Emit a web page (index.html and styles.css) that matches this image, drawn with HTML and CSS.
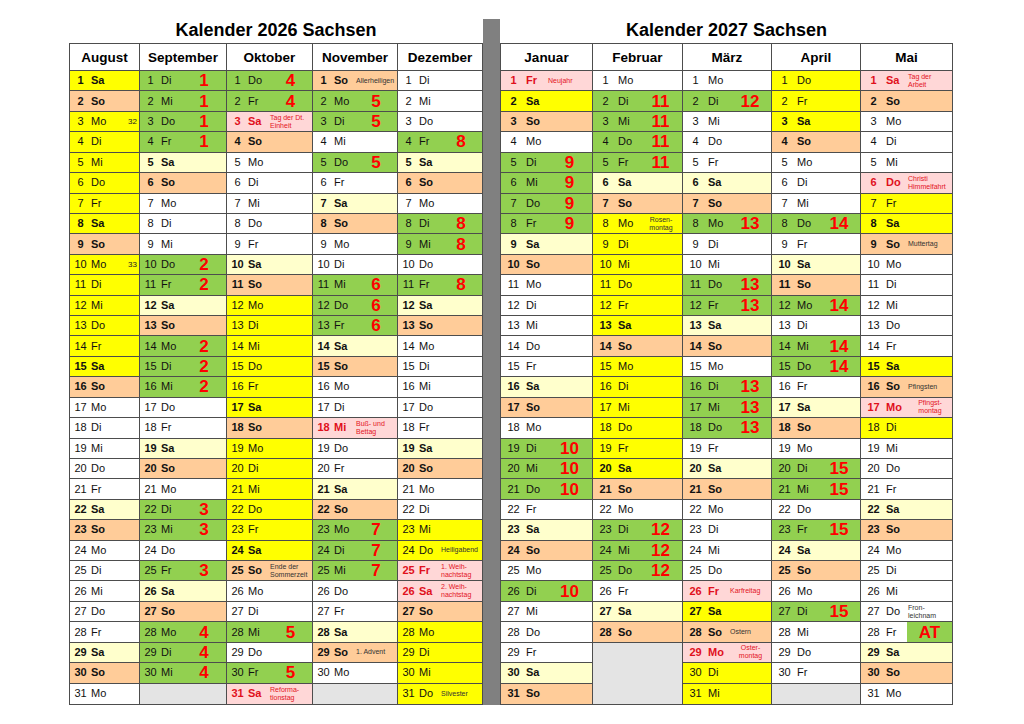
FILE: index.html
```html
<!DOCTYPE html>
<html lang="de">
<head>
<meta charset="utf-8">
<title>Kalender 2026/2027 Sachsen</title>
<link rel="stylesheet" href="styles.css">
</head>
<body>
<div class="page">
  <section class="half left">
    <h1 class="title">Kalender 2026 Sachsen</h1>
    <div class="table">
      <div class="month aug">
        <div class="head">August</div>
        <div class="d ys"><span>1</span><span>Sa</span></div>
        <div class="d so"><span>2</span><span>So</span></div>
        <div class="d y"><span>3</span><span>Mo</span><span class="kw">32</span></div>
        <div class="d y"><span>4</span><span>Di</span></div>
        <div class="d y"><span>5</span><span>Mi</span></div>
        <div class="d y"><span>6</span><span>Do</span></div>
        <div class="d y"><span>7</span><span>Fr</span></div>
        <div class="d ys"><span>8</span><span>Sa</span></div>
        <div class="d so"><span>9</span><span>So</span></div>
        <div class="d y"><span>10</span><span>Mo</span><span class="kw">33</span></div>
        <div class="d y"><span>11</span><span>Di</span></div>
        <div class="d y"><span>12</span><span>Mi</span></div>
        <div class="d y"><span>13</span><span>Do</span></div>
        <div class="d y"><span>14</span><span>Fr</span></div>
        <div class="d ys"><span>15</span><span>Sa</span></div>
        <div class="d so"><span>16</span><span>So</span></div>
        <div class="d"><span>17</span><span>Mo</span></div>
        <div class="d"><span>18</span><span>Di</span></div>
        <div class="d"><span>19</span><span>Mi</span></div>
        <div class="d"><span>20</span><span>Do</span></div>
        <div class="d"><span>21</span><span>Fr</span></div>
        <div class="d sa"><span>22</span><span>Sa</span></div>
        <div class="d so"><span>23</span><span>So</span></div>
        <div class="d"><span>24</span><span>Mo</span></div>
        <div class="d"><span>25</span><span>Di</span></div>
        <div class="d"><span>26</span><span>Mi</span></div>
        <div class="d"><span>27</span><span>Do</span></div>
        <div class="d"><span>28</span><span>Fr</span></div>
        <div class="d sa"><span>29</span><span>Sa</span></div>
        <div class="d so"><span>30</span><span>So</span></div>
        <div class="d"><span>31</span><span>Mo</span></div>
      </div>
      <div class="month">
        <div class="head">September</div>
        <div class="d g"><span>1</span><span>Di</span><span class="k">1</span></div>
        <div class="d g"><span>2</span><span>Mi</span><span class="k">1</span></div>
        <div class="d g"><span>3</span><span>Do</span><span class="k">1</span></div>
        <div class="d g"><span>4</span><span>Fr</span><span class="k">1</span></div>
        <div class="d sa"><span>5</span><span>Sa</span></div>
        <div class="d so"><span>6</span><span>So</span></div>
        <div class="d"><span>7</span><span>Mo</span></div>
        <div class="d"><span>8</span><span>Di</span></div>
        <div class="d"><span>9</span><span>Mi</span></div>
        <div class="d g"><span>10</span><span>Do</span><span class="k">2</span></div>
        <div class="d g"><span>11</span><span>Fr</span><span class="k">2</span></div>
        <div class="d sa"><span>12</span><span>Sa</span></div>
        <div class="d so"><span>13</span><span>So</span></div>
        <div class="d g"><span>14</span><span>Mo</span><span class="k">2</span></div>
        <div class="d g"><span>15</span><span>Di</span><span class="k">2</span></div>
        <div class="d g"><span>16</span><span>Mi</span><span class="k">2</span></div>
        <div class="d"><span>17</span><span>Do</span></div>
        <div class="d"><span>18</span><span>Fr</span></div>
        <div class="d sa"><span>19</span><span>Sa</span></div>
        <div class="d so"><span>20</span><span>So</span></div>
        <div class="d"><span>21</span><span>Mo</span></div>
        <div class="d g"><span>22</span><span>Di</span><span class="k">3</span></div>
        <div class="d g"><span>23</span><span>Mi</span><span class="k">3</span></div>
        <div class="d"><span>24</span><span>Do</span></div>
        <div class="d g"><span>25</span><span>Fr</span><span class="k">3</span></div>
        <div class="d sa"><span>26</span><span>Sa</span></div>
        <div class="d so"><span>27</span><span>So</span></div>
        <div class="d g"><span>28</span><span>Mo</span><span class="k">4</span></div>
        <div class="d g"><span>29</span><span>Di</span><span class="k">4</span></div>
        <div class="d g"><span>30</span><span>Mi</span><span class="k">4</span></div>
        <div class="d e"></div>
      </div>
      <div class="month">
        <div class="head">Oktober</div>
        <div class="d g"><span>1</span><span>Do</span><span class="k">4</span></div>
        <div class="d g"><span>2</span><span>Fr</span><span class="k">4</span></div>
        <div class="d h"><span>3</span><span>Sa</span><span class="t">Tag der Dt.<br>Einheit</span></div>
        <div class="d so"><span>4</span><span>So</span></div>
        <div class="d"><span>5</span><span>Mo</span></div>
        <div class="d"><span>6</span><span>Di</span></div>
        <div class="d"><span>7</span><span>Mi</span></div>
        <div class="d"><span>8</span><span>Do</span></div>
        <div class="d"><span>9</span><span>Fr</span></div>
        <div class="d sa"><span>10</span><span>Sa</span></div>
        <div class="d so"><span>11</span><span>So</span></div>
        <div class="d y"><span>12</span><span>Mo</span></div>
        <div class="d y"><span>13</span><span>Di</span></div>
        <div class="d y"><span>14</span><span>Mi</span></div>
        <div class="d y"><span>15</span><span>Do</span></div>
        <div class="d y"><span>16</span><span>Fr</span></div>
        <div class="d ys"><span>17</span><span>Sa</span></div>
        <div class="d so"><span>18</span><span>So</span></div>
        <div class="d y"><span>19</span><span>Mo</span></div>
        <div class="d y"><span>20</span><span>Di</span></div>
        <div class="d y"><span>21</span><span>Mi</span></div>
        <div class="d y"><span>22</span><span>Do</span></div>
        <div class="d y"><span>23</span><span>Fr</span></div>
        <div class="d ys"><span>24</span><span>Sa</span></div>
        <div class="d so"><span>25</span><span>So</span><span class="t">Ende der<br>Sommerzeit</span></div>
        <div class="d"><span>26</span><span>Mo</span></div>
        <div class="d"><span>27</span><span>Di</span></div>
        <div class="d g"><span>28</span><span>Mi</span><span class="k">5</span></div>
        <div class="d"><span>29</span><span>Do</span></div>
        <div class="d g"><span>30</span><span>Fr</span><span class="k">5</span></div>
        <div class="d h"><span>31</span><span>Sa</span><span class="t">Reforma-<br>tionstag</span></div>
      </div>
      <div class="month">
        <div class="head">November</div>
        <div class="d so"><span>1</span><span>So</span><span class="t">Allerheiligen</span></div>
        <div class="d g"><span>2</span><span>Mo</span><span class="k">5</span></div>
        <div class="d g"><span>3</span><span>Di</span><span class="k">5</span></div>
        <div class="d"><span>4</span><span>Mi</span></div>
        <div class="d g"><span>5</span><span>Do</span><span class="k">5</span></div>
        <div class="d"><span>6</span><span>Fr</span></div>
        <div class="d sa"><span>7</span><span>Sa</span></div>
        <div class="d so"><span>8</span><span>So</span></div>
        <div class="d"><span>9</span><span>Mo</span></div>
        <div class="d"><span>10</span><span>Di</span></div>
        <div class="d g"><span>11</span><span>Mi</span><span class="k">6</span></div>
        <div class="d g"><span>12</span><span>Do</span><span class="k">6</span></div>
        <div class="d g"><span>13</span><span>Fr</span><span class="k">6</span></div>
        <div class="d sa"><span>14</span><span>Sa</span></div>
        <div class="d so"><span>15</span><span>So</span></div>
        <div class="d"><span>16</span><span>Mo</span></div>
        <div class="d"><span>17</span><span>Di</span></div>
        <div class="d h"><span>18</span><span>Mi</span><span class="t">Buß- und<br>Bettag</span></div>
        <div class="d"><span>19</span><span>Do</span></div>
        <div class="d"><span>20</span><span>Fr</span></div>
        <div class="d sa"><span>21</span><span>Sa</span></div>
        <div class="d so"><span>22</span><span>So</span></div>
        <div class="d g"><span>23</span><span>Mo</span><span class="k">7</span></div>
        <div class="d g"><span>24</span><span>Di</span><span class="k">7</span></div>
        <div class="d g"><span>25</span><span>Mi</span><span class="k">7</span></div>
        <div class="d"><span>26</span><span>Do</span></div>
        <div class="d"><span>27</span><span>Fr</span></div>
        <div class="d sa"><span>28</span><span>Sa</span></div>
        <div class="d so"><span>29</span><span>So</span><span class="t">1. Advent</span></div>
        <div class="d"><span>30</span><span>Mo</span></div>
        <div class="d e"></div>
      </div>
      <div class="month">
        <div class="head">Dezember</div>
        <div class="d"><span>1</span><span>Di</span></div>
        <div class="d"><span>2</span><span>Mi</span></div>
        <div class="d"><span>3</span><span>Do</span></div>
        <div class="d g"><span>4</span><span>Fr</span><span class="k">8</span></div>
        <div class="d sa"><span>5</span><span>Sa</span></div>
        <div class="d so"><span>6</span><span>So</span></div>
        <div class="d"><span>7</span><span>Mo</span></div>
        <div class="d g"><span>8</span><span>Di</span><span class="k">8</span></div>
        <div class="d g"><span>9</span><span>Mi</span><span class="k">8</span></div>
        <div class="d"><span>10</span><span>Do</span></div>
        <div class="d g"><span>11</span><span>Fr</span><span class="k">8</span></div>
        <div class="d sa"><span>12</span><span>Sa</span></div>
        <div class="d so"><span>13</span><span>So</span></div>
        <div class="d"><span>14</span><span>Mo</span></div>
        <div class="d"><span>15</span><span>Di</span></div>
        <div class="d"><span>16</span><span>Mi</span></div>
        <div class="d"><span>17</span><span>Do</span></div>
        <div class="d"><span>18</span><span>Fr</span></div>
        <div class="d sa"><span>19</span><span>Sa</span></div>
        <div class="d so"><span>20</span><span>So</span></div>
        <div class="d"><span>21</span><span>Mo</span></div>
        <div class="d"><span>22</span><span>Di</span></div>
        <div class="d y"><span>23</span><span>Mi</span></div>
        <div class="d y"><span>24</span><span>Do</span><span class="t">Heiligabend</span></div>
        <div class="d h"><span>25</span><span>Fr</span><span class="t">1. Weih-<br>nachtstag</span></div>
        <div class="d h"><span>26</span><span>Sa</span><span class="t">2. Weih-<br>nachtstag</span></div>
        <div class="d so"><span>27</span><span>So</span></div>
        <div class="d y"><span>28</span><span>Mo</span></div>
        <div class="d y"><span>29</span><span>Di</span></div>
        <div class="d y"><span>30</span><span>Mi</span></div>
        <div class="d y"><span>31</span><span>Do</span><span class="t">Silvester</span></div>
      </div>
    </div>
  </section>

  <div class="divider"></div>

  <section class="half right">
    <h1 class="title">Kalender 2027 Sachsen</h1>
    <div class="table">
      <div class="month">
        <div class="head">Januar</div>
        <div class="d h"><span>1</span><span>Fr</span><span class="t">Neujahr</span></div>
        <div class="d ys"><span>2</span><span>Sa</span></div>
        <div class="d so"><span>3</span><span>So</span></div>
        <div class="d"><span>4</span><span>Mo</span></div>
        <div class="d g"><span>5</span><span>Di</span><span class="k">9</span></div>
        <div class="d g"><span>6</span><span>Mi</span><span class="k">9</span></div>
        <div class="d g"><span>7</span><span>Do</span><span class="k">9</span></div>
        <div class="d g"><span>8</span><span>Fr</span><span class="k">9</span></div>
        <div class="d sa"><span>9</span><span>Sa</span></div>
        <div class="d so"><span>10</span><span>So</span></div>
        <div class="d"><span>11</span><span>Mo</span></div>
        <div class="d"><span>12</span><span>Di</span></div>
        <div class="d"><span>13</span><span>Mi</span></div>
        <div class="d"><span>14</span><span>Do</span></div>
        <div class="d"><span>15</span><span>Fr</span></div>
        <div class="d sa"><span>16</span><span>Sa</span></div>
        <div class="d so"><span>17</span><span>So</span></div>
        <div class="d"><span>18</span><span>Mo</span></div>
        <div class="d g"><span>19</span><span>Di</span><span class="k">10</span></div>
        <div class="d g"><span>20</span><span>Mi</span><span class="k">10</span></div>
        <div class="d g"><span>21</span><span>Do</span><span class="k">10</span></div>
        <div class="d"><span>22</span><span>Fr</span></div>
        <div class="d sa"><span>23</span><span>Sa</span></div>
        <div class="d so"><span>24</span><span>So</span></div>
        <div class="d"><span>25</span><span>Mo</span></div>
        <div class="d g"><span>26</span><span>Di</span><span class="k">10</span></div>
        <div class="d"><span>27</span><span>Mi</span></div>
        <div class="d"><span>28</span><span>Do</span></div>
        <div class="d"><span>29</span><span>Fr</span></div>
        <div class="d sa"><span>30</span><span>Sa</span></div>
        <div class="d so"><span>31</span><span>So</span></div>
      </div>
      <div class="month">
        <div class="head">Februar</div>
        <div class="d"><span>1</span><span>Mo</span></div>
        <div class="d g"><span>2</span><span>Di</span><span class="k">11</span></div>
        <div class="d g"><span>3</span><span>Mi</span><span class="k">11</span></div>
        <div class="d g"><span>4</span><span>Do</span><span class="k">11</span></div>
        <div class="d g"><span>5</span><span>Fr</span><span class="k">11</span></div>
        <div class="d sa"><span>6</span><span>Sa</span></div>
        <div class="d so"><span>7</span><span>So</span></div>
        <div class="d y"><span>8</span><span>Mo</span><span class="t c">Rosen-<br>montag</span></div>
        <div class="d y"><span>9</span><span>Di</span></div>
        <div class="d y"><span>10</span><span>Mi</span></div>
        <div class="d y"><span>11</span><span>Do</span></div>
        <div class="d y"><span>12</span><span>Fr</span></div>
        <div class="d ys"><span>13</span><span>Sa</span></div>
        <div class="d so"><span>14</span><span>So</span></div>
        <div class="d y"><span>15</span><span>Mo</span></div>
        <div class="d y"><span>16</span><span>Di</span></div>
        <div class="d y"><span>17</span><span>Mi</span></div>
        <div class="d y"><span>18</span><span>Do</span></div>
        <div class="d y"><span>19</span><span>Fr</span></div>
        <div class="d ys"><span>20</span><span>Sa</span></div>
        <div class="d so"><span>21</span><span>So</span></div>
        <div class="d"><span>22</span><span>Mo</span></div>
        <div class="d g"><span>23</span><span>Di</span><span class="k">12</span></div>
        <div class="d g"><span>24</span><span>Mi</span><span class="k">12</span></div>
        <div class="d g"><span>25</span><span>Do</span><span class="k">12</span></div>
        <div class="d"><span>26</span><span>Fr</span></div>
        <div class="d sa"><span>27</span><span>Sa</span></div>
        <div class="d so"><span>28</span><span>So</span></div>
        <div class="d e span3"></div>
      </div>
      <div class="month">
        <div class="head">März</div>
        <div class="d"><span>1</span><span>Mo</span></div>
        <div class="d g"><span>2</span><span>Di</span><span class="k">12</span></div>
        <div class="d"><span>3</span><span>Mi</span></div>
        <div class="d"><span>4</span><span>Do</span></div>
        <div class="d"><span>5</span><span>Fr</span></div>
        <div class="d sa"><span>6</span><span>Sa</span></div>
        <div class="d so"><span>7</span><span>So</span></div>
        <div class="d g"><span>8</span><span>Mo</span><span class="k">13</span></div>
        <div class="d"><span>9</span><span>Di</span></div>
        <div class="d"><span>10</span><span>Mi</span></div>
        <div class="d g"><span>11</span><span>Do</span><span class="k">13</span></div>
        <div class="d g"><span>12</span><span>Fr</span><span class="k">13</span></div>
        <div class="d sa"><span>13</span><span>Sa</span></div>
        <div class="d so"><span>14</span><span>So</span></div>
        <div class="d"><span>15</span><span>Mo</span></div>
        <div class="d g"><span>16</span><span>Di</span><span class="k">13</span></div>
        <div class="d g"><span>17</span><span>Mi</span><span class="k">13</span></div>
        <div class="d g"><span>18</span><span>Do</span><span class="k">13</span></div>
        <div class="d"><span>19</span><span>Fr</span></div>
        <div class="d sa"><span>20</span><span>Sa</span></div>
        <div class="d so"><span>21</span><span>So</span></div>
        <div class="d"><span>22</span><span>Mo</span></div>
        <div class="d"><span>23</span><span>Di</span></div>
        <div class="d"><span>24</span><span>Mi</span></div>
        <div class="d"><span>25</span><span>Do</span></div>
        <div class="d h"><span>26</span><span>Fr</span><span class="t">Karfreitag</span></div>
        <div class="d ys"><span>27</span><span>Sa</span></div>
        <div class="d so"><span>28</span><span>So</span><span class="t">Ostern</span></div>
        <div class="d h"><span>29</span><span>Mo</span><span class="t c">Oster-<br>montag</span></div>
        <div class="d y"><span>30</span><span>Di</span></div>
        <div class="d y"><span>31</span><span>Mi</span></div>
      </div>
      <div class="month">
        <div class="head">April</div>
        <div class="d y"><span>1</span><span>Do</span></div>
        <div class="d y"><span>2</span><span>Fr</span></div>
        <div class="d ys"><span>3</span><span>Sa</span></div>
        <div class="d so"><span>4</span><span>So</span></div>
        <div class="d"><span>5</span><span>Mo</span></div>
        <div class="d"><span>6</span><span>Di</span></div>
        <div class="d"><span>7</span><span>Mi</span></div>
        <div class="d g"><span>8</span><span>Do</span><span class="k">14</span></div>
        <div class="d"><span>9</span><span>Fr</span></div>
        <div class="d sa"><span>10</span><span>Sa</span></div>
        <div class="d so"><span>11</span><span>So</span></div>
        <div class="d g"><span>12</span><span>Mo</span><span class="k">14</span></div>
        <div class="d"><span>13</span><span>Di</span></div>
        <div class="d g"><span>14</span><span>Mi</span><span class="k">14</span></div>
        <div class="d g"><span>15</span><span>Do</span><span class="k">14</span></div>
        <div class="d"><span>16</span><span>Fr</span></div>
        <div class="d sa"><span>17</span><span>Sa</span></div>
        <div class="d so"><span>18</span><span>So</span></div>
        <div class="d"><span>19</span><span>Mo</span></div>
        <div class="d g"><span>20</span><span>Di</span><span class="k">15</span></div>
        <div class="d g"><span>21</span><span>Mi</span><span class="k">15</span></div>
        <div class="d"><span>22</span><span>Do</span></div>
        <div class="d g"><span>23</span><span>Fr</span><span class="k">15</span></div>
        <div class="d sa"><span>24</span><span>Sa</span></div>
        <div class="d so"><span>25</span><span>So</span></div>
        <div class="d"><span>26</span><span>Mo</span></div>
        <div class="d g"><span>27</span><span>Di</span><span class="k">15</span></div>
        <div class="d"><span>28</span><span>Mi</span></div>
        <div class="d"><span>29</span><span>Do</span></div>
        <div class="d"><span>30</span><span>Fr</span></div>
        <div class="d e"></div>
      </div>
      <div class="month">
        <div class="head">Mai</div>
        <div class="d h"><span>1</span><span>Sa</span><span class="t">Tag der<br>Arbeit</span></div>
        <div class="d so"><span>2</span><span>So</span></div>
        <div class="d"><span>3</span><span>Mo</span></div>
        <div class="d"><span>4</span><span>Di</span></div>
        <div class="d"><span>5</span><span>Mi</span></div>
        <div class="d h"><span>6</span><span>Do</span><span class="t">Christi<br>Himmelfahrt</span></div>
        <div class="d y"><span>7</span><span>Fr</span></div>
        <div class="d ys"><span>8</span><span>Sa</span></div>
        <div class="d so"><span>9</span><span>So</span><span class="t">Muttertag</span></div>
        <div class="d"><span>10</span><span>Mo</span></div>
        <div class="d"><span>11</span><span>Di</span></div>
        <div class="d"><span>12</span><span>Mi</span></div>
        <div class="d"><span>13</span><span>Do</span></div>
        <div class="d"><span>14</span><span>Fr</span></div>
        <div class="d ys"><span>15</span><span>Sa</span></div>
        <div class="d so"><span>16</span><span>So</span><span class="t">Pfingsten</span></div>
        <div class="d h"><span>17</span><span>Mo</span><span class="t c">Pfingst-<br>montag</span></div>
        <div class="d y"><span>18</span><span>Di</span></div>
        <div class="d"><span>19</span><span>Mi</span></div>
        <div class="d"><span>20</span><span>Do</span></div>
        <div class="d"><span>21</span><span>Fr</span></div>
        <div class="d sa"><span>22</span><span>Sa</span></div>
        <div class="d so"><span>23</span><span>So</span></div>
        <div class="d"><span>24</span><span>Mo</span></div>
        <div class="d"><span>25</span><span>Di</span></div>
        <div class="d"><span>26</span><span>Mi</span></div>
        <div class="d"><span>27</span><span>Do</span><span class="t">Fron-<br>leichnam</span></div>
        <div class="d"><span>28</span><span>Fr</span><span class="at">AT</span></div>
        <div class="d sa"><span>29</span><span>Sa</span></div>
        <div class="d so"><span>30</span><span>So</span></div>
        <div class="d"><span>31</span><span>Mo</span></div>
      </div>
    </div>
  </section>
</div>
</body>
</html>
```

FILE: styles.css
```css
* {
  box-sizing: border-box;
  margin: 0;
  padding: 0;
}

body {
  font-family: "Liberation Sans", Arial, sans-serif;
  background: #ffffff;
  color: #111111;
}

.page {
  display: flex;
  align-items: flex-start;
  padding-left: 69px;
  height: 724px;
}

.half {
  display: flex;
  flex-direction: column;
}

.left {
  width: 414px;
  --n: 21px;
  --w: 21px;
}

.right {
  width: 453px;
  --n: 25px;
  --w: 21px;
}

.title {
  margin-top: 20px;
  height: 20px;
  line-height: 20px;
  margin-bottom: 3px;
  font-size: 18px;
  font-weight: bold;
  text-align: center;
  color: #000;
}

.divider {
  width: 17px;
  margin-top: 19px;
  height: 686px;
  background: #808080;
}

.table {
  display: grid;
  height: 662px;
  border: 1px solid #4d4d4d;
}

.left .table {
  grid-template-columns: 69px 87px 86px 85px 85px;
}

.right .table {
  grid-template-columns: 91px 90px 89px 89px 92px;
}

.month {
  display: grid;
  grid-template-rows: 27px repeat(31, minmax(0, 1fr));
  border-left: 1px solid #4d4d4d;
  min-height: 0;
}

.month:first-child {
  border-left: 0;
}

.head {
  display: flex;
  align-items: center;
  justify-content: center;
  font-size: 13.5px;
  font-weight: bold;
  color: #000;
  border-bottom: 1px solid #4d4d4d;
}

.d {
  display: grid;
  grid-template-columns: var(--n) var(--w) minmax(0, 1fr);
  align-items: center;
  font-size: 11px;
  line-height: 13px;
  border-bottom: 1px solid #4d4d4d;
  min-height: 0;
  overflow: hidden;
  white-space: nowrap;
}

.d:last-child {
  border-bottom: 0;
}

.d > span:first-child {
  text-align: center;
}

.y { background: #ffff00; }
.ys { background: #ffff00; font-weight: bold; }
.sa { background: #ffffcc; font-weight: bold; }
.so { background: #ffcc99; font-weight: bold; }
.g { background: #92d050; }
.h { background: #ffd7d7; font-weight: bold; color: #e0101c; }
.e { background: #e4e4e4; }
.span3 { grid-row: span 3; }

.k {
  text-align: center;
  font-size: 17px;
  line-height: 17px;
  font-weight: bold;
  color: #ff0000;
}

.t {
  font-size: 7px;
  line-height: 8px;
  font-weight: normal;
  color: #333333;
  padding-left: 1px;
}

.h .t {
  color: #e3141e;
}

.t.c {
  text-align: center;
}

.kw {
  font-size: 8px;
  text-align: right;
  padding-right: 2px;
  color: #222;
}

.at {
  align-self: stretch;
  display: flex;
  align-items: center;
  justify-content: center;
  background: #92d050;
  font-size: 17px;
  font-weight: bold;
  color: #ff0000;
}
```
